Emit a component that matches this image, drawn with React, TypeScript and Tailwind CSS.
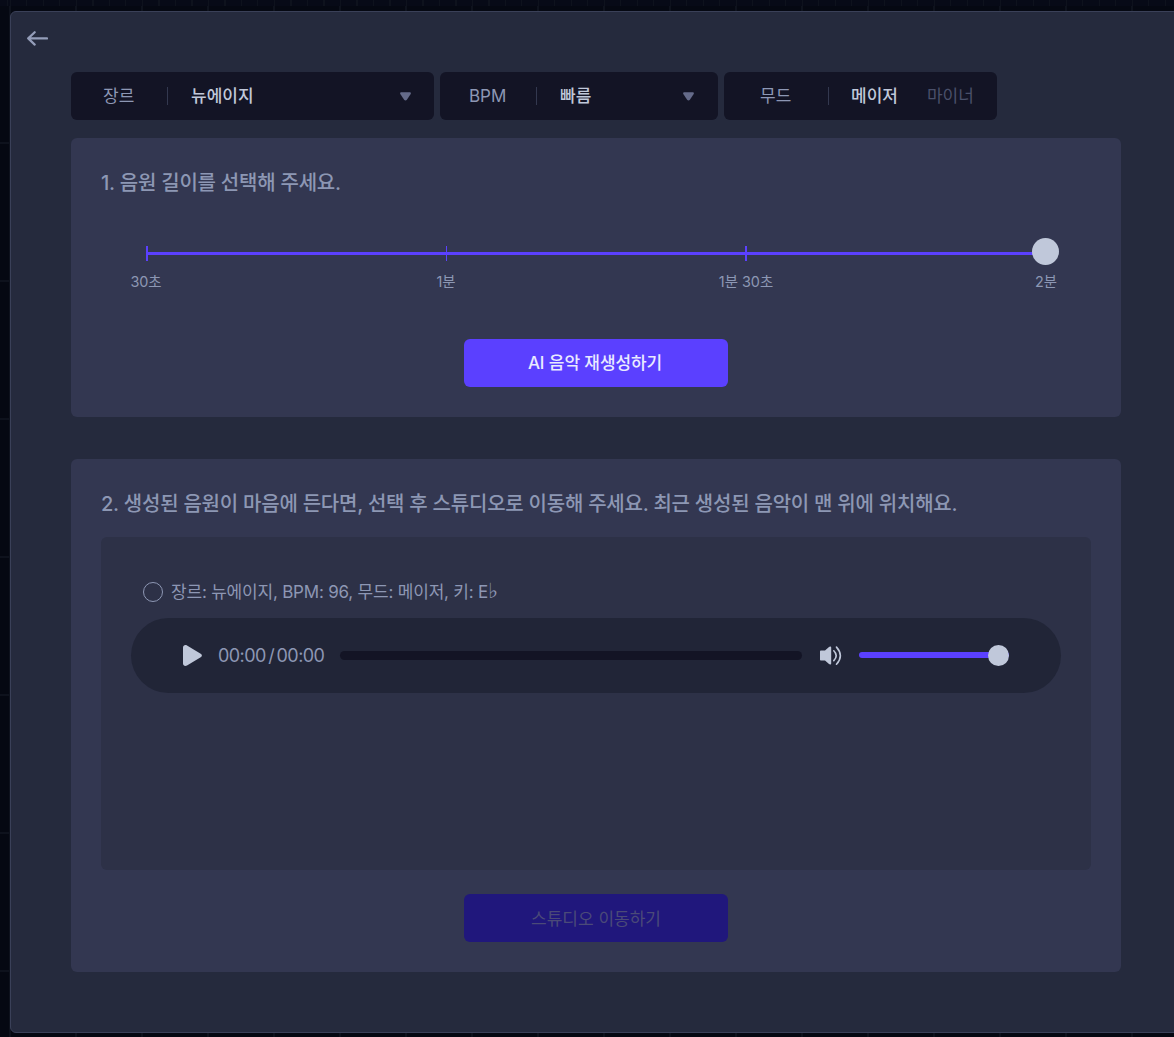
import React from 'react';

interface SelectBoxProps {
  label: string;
  value: string;
  className: string;
  labelClassName: string;
  arrowClassName: string;
}

const Divider: React.FC = () => <span className="h-[18px] w-px bg-[#33384f]"></span>;

const SelectBox: React.FC<SelectBoxProps> = ({ label, value, className, labelClassName, arrowClassName }) => {
  return (
    <button className={`flex h-12 items-center rounded-md bg-[#131425] ${className}`}>
      <span className={`pt-0.5 text-left text-[#8d97b4] ${labelClassName}`}>{label}</span>
      <Divider />
      <span className="ml-[23px] flex-1 pt-0.5 text-left font-medium text-[#c0c8da]">{value}</span>
      <svg className={`h-[9px] w-[11px] ${arrowClassName}`} viewBox="0 0 11 9" fill="#656b8a">
        <path d="M1.3 0.2h8.4c1 0 1.5 0.9 1 1.7L6.9 7.8c-0.7 1-2.1 1-2.8 0L0.3 1.9C-0.2 1.1 0.3 0.2 1.3 0.2z" />
      </svg>
    </button>
  );
};

const steps = [
  { label: '30초', tick: 'w-0.5 translate-x-px' },
  { label: '1분', tick: 'w-px ml-px' },
  { label: '1분 30초', tick: 'w-0.5' },
  { label: '2분', tick: 'w-0.5' },
];

const LengthSlider: React.FC = () => {
  return (
    <div className="relative mx-[45px] mt-[50px] h-[52px]">
      <div className="flex h-[15px] items-center">
        <div className="ml-px h-[3px] w-full bg-[#5b40ff]"></div>
      </div>
      {steps.map((step, i) => (
        <div
          key={step.label}
          className="absolute top-0 flex w-24 -translate-x-1/2 flex-col items-center"
          style={{ left: `${(i * 100) / 3}%` }}
        >
          <span className={`h-[15px] bg-[#5b40ff] ${step.tick}`}></span>
          <span className="mt-[11px] text-[14.4px] leading-5 text-[#8d97b4]">{step.label}</span>
        </div>
      ))}
      <span className="absolute -top-2 -right-[13px] size-[27px] rounded-full bg-[#c0c8da]"></span>
    </div>
  );
};

const AudioPlayer: React.FC = () => {
  return (
    <div className="flex h-[75px] items-center rounded-full bg-[#212537] px-[52px]">
      <svg className="h-[21px] w-[19px]" viewBox="0 0 19 21" fill="#c0c8da">
        <path d="M0 2.500C0 0.300 2.200-0.600 4 0.500L17.700 8.700c1.600 1 1.600 2.600 0 3.600L4 20.500C2.200 21.600 0 20.700 0 18.500z" />
      </svg>
      <span className="ml-4 w-[106px] text-[18px] tracking-[-0.58px] [word-spacing:-2px] whitespace-nowrap text-[#8d97b4]">
        00:00 / 00:00
      </span>
      <div className="ml-4 h-[9px] flex-1 rounded-full bg-[#131425]"></div>
      <svg className="ml-[18px] h-5 w-[22px]" viewBox="0 0 22 20" fill="#c0c8da">
        <path d="M0.800 4.600H5L9 0.900Q9.800 0.300 10.400 0.500Q11.200 0.700 11.200 1.600V17.400Q11.200 18.300 10.400 18.500Q9.800 18.700 9 18.100L5 14.600H0.800Q0 14.600 0 13.800V5.400Q0 4.600 0.800 4.600z" />
        <path d="M13.800 4.800Q18.600 9.600 13.800 14.600M16.500 1.100Q24.200 9.700 16.500 18.200" fill="none" stroke="#c0c8da" strokeWidth="1.600" strokeLinecap="round" />
      </svg>
      <div className="relative ml-[17px] flex w-[150px] items-center">
        <div className="mb-px h-1.5 w-full rounded-full bg-[#5b40ff]"></div>
        <span className="absolute right-0 size-[21px] rounded-full bg-[#c0c8da]"></span>
      </div>
    </div>
  );
};

const App: React.FC = () => {
  return (
    <div className="relative h-[1037px] w-full overflow-hidden bg-[#050812] pt-[11px] pl-[10px] font-['Inter','Noto_Sans_CJK_KR',sans-serif] text-[17px]">
      {/* Timeline grid behind the panel */}
      <div className="absolute inset-0 bg-[repeating-linear-gradient(90deg,#0e121d_0_2px,transparent_2px_66px)] bg-[position:9px_0]"></div>
      <div className="absolute inset-x-0 top-0 h-1.5 bg-[#070a17] bg-[repeating-linear-gradient(90deg,#0e121d_0_1px,transparent_1px_16.5px)] bg-[position:10px_0]"></div>
      <div className="absolute top-[142px] bottom-0 left-0 w-[9px] bg-[repeating-linear-gradient(180deg,#0e121d_0_2px,transparent_2px_138px)]"></div>

      <main className="relative h-[1022px] w-[1172px] rounded-md border border-[#3a4058] bg-[#252a3d] px-[60px]">
        <header className="-ml-11 flex h-[60px] items-start pt-[19px]">
          <svg className="h-4 w-[21px]" viewBox="0 0 21 16" fill="none" stroke="#949db9" strokeWidth="2.200" strokeLinecap="round" strokeLinejoin="round">
            <path d="M20 7.400H1.200M7.700 1.200L1.200 7.400l6.500 6.200" />
          </svg>
        </header>

        <div className="flex gap-1.5">
          <SelectBox label="장르" value="뉴에이지" className="w-[363px]" labelClassName="w-24 pl-8" arrowClassName="mr-[23px]" />
          <SelectBox label="BPM" value="빠름" className="w-[278px]" labelClassName="w-24 pl-[29px]" arrowClassName="mr-6" />
          <div className="flex h-12 w-[273px] items-center rounded-md bg-[#131425]">
            <span className="w-[104px] pt-0.5 pl-9 text-[#8d97b4]">무드</span>
            <Divider />
            <span className="ml-[22px] pt-0.5 font-medium text-[#c0c8da]">메이저</span>
            <span className="ml-[29px] pt-0.5 text-[#4a506a]">마이너</span>
          </div>
        </div>

        <section className="mt-[18px] h-[279px] w-[1050px] rounded-md bg-[#333751] px-[30px] pt-[31px]">
          <h2 className="h-[27px] text-[20px] leading-7 font-medium tracking-[-0.23px] text-[#8d97b4]">
            1. 음원 길이를 선택해 주세요.
          </h2>
          <LengthSlider />
          <button className="mx-auto mt-[41px] block h-12 w-[264px] rounded-md bg-[#5b40ff] pt-0.5 pr-0.5 font-medium tracking-[-0.1px] text-[#e9eaff]">
            AI 음악 재생성하기
          </button>
        </section>

        <section className="mt-[42px] h-[513px] w-[1050px] rounded-md bg-[#333751] px-[30px] pt-[31px]">
          <h2 className="h-[27px] text-[20px] leading-7 font-medium tracking-[-0.23px] whitespace-nowrap text-[#8d97b4]">
            2. 생성된 음원이 마음에 든다면, 선택 후 스튜디오로 이동해 주세요. 최근 생성된 음악이 맨 위에 위치해요.
          </h2>
          <div className="mt-5 h-[333px] rounded-md bg-[#2d3147] px-[30px] pt-[42px]">
            <label className="ml-3 flex h-[26px] items-center">
              <span className="size-5 rounded-full border border-[#8d97b4]"></span>
              <span className="ml-2 pt-0.5 tracking-[-0.2px] text-[#8d97b4]">
                장르: 뉴에이지, BPM: 96, 무드: 메이저, 키: E
                <span className="font-['DejaVu_Sans',sans-serif] text-[21px] leading-none">♭</span>
              </span>
            </label>
            <div className="mt-[13px]">
              <AudioPlayer />
            </div>
          </div>
          <button disabled className="mx-auto mt-6 block h-12 w-[264px] rounded-md bg-[#20177c] pt-[3px] text-[#4b4a78]">
            스튜디오 이동하기
          </button>
        </section>
      </main>
    </div>
  );
};

export default App;
